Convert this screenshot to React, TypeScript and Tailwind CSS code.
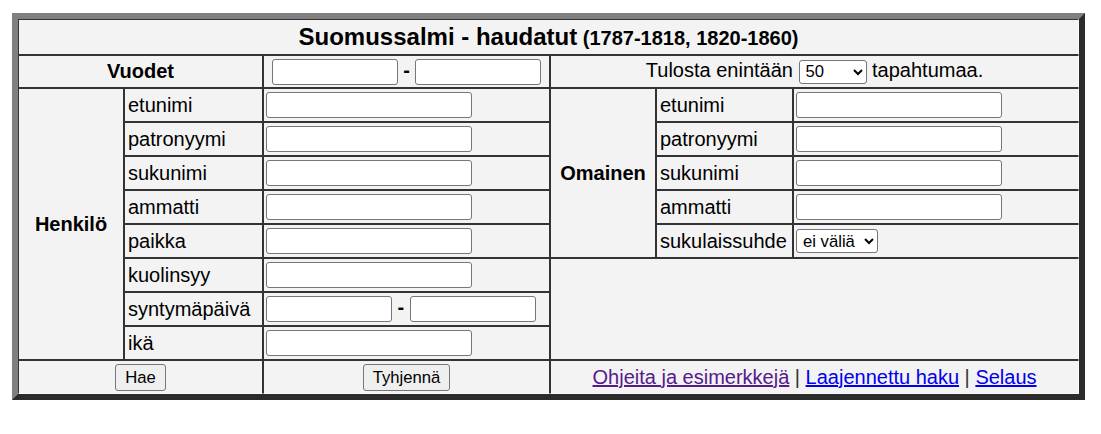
import React from "react";

const cell = "border border-[#333] bg-[#f3f3f3] p-0";
const inp = "h-[26px] w-[206px] bg-white border border-[#767676] rounded-[3px] align-middle px-[2px] text-[16.67px]";
const inpS = "h-[26px] w-[126px] bg-white border border-[#767676] rounded-[3px] align-middle px-[2px] text-[16.67px]";

function LabelCell({ children }: { children: React.ReactNode }) {
  return <td className={`${cell} pl-[3px] text-left`}>{children}</td>;
}

function InputCell({ last }: { last?: boolean }) {
  return (
    <td className={`${cell} pl-[2px] ${last ? "border-r-[#fafafa]" : ""}`}>
      <input type="text" className={inp} />
    </td>
  );
}

export default function App() {
  const left = ["etunimi", "patronyymi", "sukunimi", "ammatti", "paikka"];
  const right = ["etunimi", "patronyymi", "sukunimi", "ammatti"];
  return (
    <div className="bg-white pt-[13px] pl-[12px] text-black text-[20px] leading-[23px]" style={{ fontFamily: '"Liberation Sans", Arial, sans-serif' }}>
      <table className="table-fixed border-separate border-spacing-0 w-[1073px] border-[6px] border-t-[#808080] border-l-[#808080] border-r-[#2b2b2b] border-b-[#2b2b2b] bg-[#f3f3f3]">
        <colgroup>
          <col className="w-[106px]" />
          <col className="w-[139px]" />
          <col className="w-[287px]" />
          <col className="w-[106px]" />
          <col className="w-[137px]" />
          <col className="w-[286px]" />
        </colgroup>
        <tbody>
          <tr className="h-[36px]">
            <td colSpan={6} className={`${cell} text-center font-bold border-r-[#fafafa]`}>
              <span className="text-[24px]">Suomussalmi - haudatut</span>{" "}
              <span className="text-[20px]">(1787-1818, 1820-1860)</span>
            </td>
          </tr>
          <tr className="h-[33px]">
            <td colSpan={2} className={`${cell} text-center font-bold`}>Vuodet</td>
            <td className={`${cell} text-center`}>
              <input type="text" className={inpS} /> <b>-</b> <input type="text" className={inpS} />
            </td>
            <td colSpan={3} className={`${cell} text-center border-r-[#fafafa]`}>
              Tulosta enintään{" "}
              <select defaultValue="50" className="h-[24px] w-[68px] bg-white border border-[#767676] rounded-[3px] align-middle text-[16.67px] pl-[2px]">
                <option>10</option>
                <option>50</option>
                <option>100</option>
              </select>{" "}
              tapahtumaa.
            </td>
          </tr>
          {left.map((l, i) => (
            <tr key={l} className="h-[34px]">
              {i === 0 && (
                <td rowSpan={8} className={`${cell} text-center font-bold`}>Henkilö</td>
              )}
              <LabelCell>{l}</LabelCell>
              <InputCell />
              {i === 0 && (
                <td rowSpan={5} className={`${cell} text-center font-bold`}>Omainen</td>
              )}
              {i < 4 ? (
                <>
                  <LabelCell>{right[i]}</LabelCell>
                  <InputCell last />
                </>
              ) : (
                <>
                  <LabelCell>sukulaissuhde</LabelCell>
                  <td className={`${cell} pl-[2px] border-r-[#fafafa]`}>
                    <select defaultValue="ei väliä" className="h-[24px] w-[82px] bg-white border border-[#767676] rounded-[3px] align-middle text-[16.67px] pl-[2px]">
                      <option>ei väliä</option>
                      <option>vanhempi</option>
                      <option>puoliso</option>
                    </select>
                  </td>
                </>
              )}
            </tr>
          ))}
          <tr className="h-[34px]">
            <LabelCell>kuolinsyy</LabelCell>
            <InputCell />
            <td colSpan={3} rowSpan={3} className={`${cell} border-r-[#fafafa]`}></td>
          </tr>
          <tr className="h-[34px]">
            <LabelCell>syntymäpäivä</LabelCell>
            <td className={`${cell} pl-[2px] whitespace-nowrap`}>
              <input type="text" className={inpS} /> <b>-</b> <input type="text" className={inpS} />
            </td>
          </tr>
          <tr className="h-[34px]">
            <LabelCell>ikä</LabelCell>
            <InputCell />
          </tr>
          <tr className="h-[34px]">
            <td colSpan={2} className={`${cell} text-center border-b-[#fafafa]`}>
              <button className="h-[27px] px-[9px] bg-[#efefef] border border-[#767676] rounded-[3px] text-[16.67px] align-middle">Hae</button>
            </td>
            <td className={`${cell} text-center border-b-[#fafafa]`}>
              <button className="h-[27px] px-[9px] bg-[#efefef] border border-[#767676] rounded-[3px] text-[16.67px] align-middle">Tyhjennä</button>
            </td>
            <td colSpan={3} className={`${cell} text-center border-b-[#fafafa] border-r-[#fafafa]`}>
              <a href="#" className="underline text-[#551a8b]">Ohjeita ja esimerkkejä</a>
              <span className="text-[#333]"> | </span>
              <a href="#" className="underline text-[#0000ee]">Laajennettu haku</a>
              <span className="text-[#333]"> | </span>
              <a href="#" className="underline text-[#0000ee]">Selaus</a>
            </td>
          </tr>
        </tbody>
      </table>
    </div>
  );
}
